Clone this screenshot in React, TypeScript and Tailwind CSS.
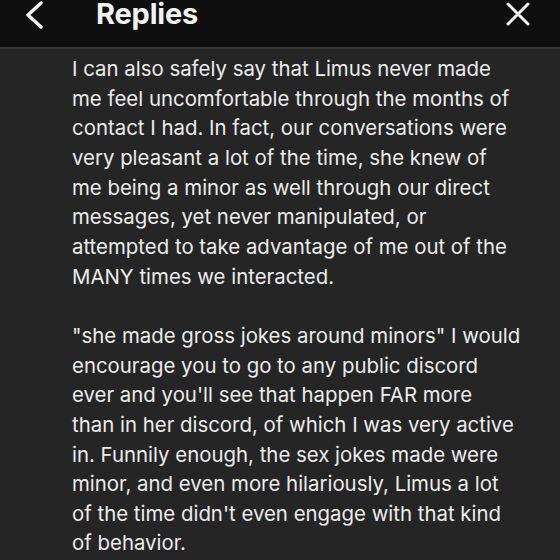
export default function App() {
  const para1 = [
    'I can also safely say that Limus never made',
    'me feel uncomfortable through the months of',
    'contact I had. In fact, our conversations were',
    'very pleasant a lot of the time, she knew of',
    'me being a minor as well through our direct',
    'messages, yet never manipulated, or',
    'attempted to take advantage of me out of the',
    'MANY times we interacted.',
  ];
  const para2 = [
    '"she made gross jokes around minors" I would',
    'encourage you to go to any public discord',
    "ever and you'll see that happen FAR more",
    'than in her discord, of which I was very active',
    'in. Funnily enough, the sex jokes made were',
    'minor, and even more hilariously, Limus a lot',
    "of the time didn't even engage with that kind",
    'of behavior.',
  ];

  return (
    <div className="w-[560px] h-[560px] overflow-hidden bg-[#252525] flex flex-col" style={{ fontFamily: 'Inter, "Noto Sans", sans-serif' }}>
      <header className="h-[49px] shrink-0 bg-[#0f0f0f] border-b-2 border-[#383838] flex items-start">
        <svg className="ml-[24px] mt-[1px] w-[20px] h-[28px]" viewBox="0 0 20 28" fill="none" stroke="#f2f2f2" strokeWidth={3.4} strokeLinecap="round" strokeLinejoin="round">
          <path d="M17 2L4 14l13 12" />
        </svg>
        <h1 className="ml-[52px] text-[29px] font-bold text-[#f2f2f2] leading-[27px] tracking-[-0.2px]">Replies</h1>
        <svg className="ml-auto mr-[30px] mt-[2px] w-[24px] h-[24px]" viewBox="0 0 24 24" fill="none" stroke="#f2f2f2" strokeWidth={3} strokeLinecap="round">
          <path d="M2 2l20 20M22 2L2 22" />
        </svg>
      </header>
      <main className="pl-[72px] pt-[5px] text-[20.4px] leading-[29.65px] text-[#ececec] whitespace-nowrap">
        {para1.map((l) => (
          <div key={l}>{l}</div>
        ))}
        <div className="h-[29.65px]" />
        {para2.map((l) => (
          <div key={l}>{l}</div>
        ))}
      </main>
    </div>
  );
}
